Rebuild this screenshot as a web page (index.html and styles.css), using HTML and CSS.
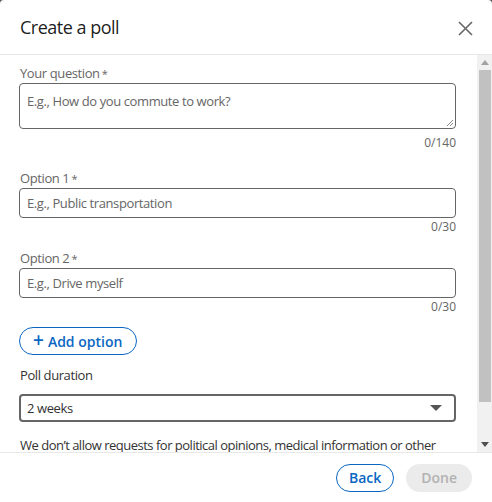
FILE: index.html
```html
<!DOCTYPE html>
<html>
<head>
<meta charset="utf-8">
<link rel="stylesheet" href="styles.css">
</head>
<body>
<div class="modal">
  <header class="modal-header">
    <h2 class="title">Create a poll</h2>
    <button class="close" aria-label="Dismiss">
      <svg width="15" height="15" viewBox="0 0 15 15"><path d="M1 1 L14 14 M14 1 L1 14" stroke="#666" stroke-width="1.6" fill="none"/></svg>
    </button>
  </header>
  <div class="modal-body">
    <div class="content">
      <div class="field field-q">
        <label class="label">Your question<span class="req">*</span></label>
        <div class="textarea">
          <span class="placeholder">E.g., How do you commute to work?</span>
          <svg class="grip" width="8" height="8" viewBox="0 0 8 8"><path d="M7 1 L1 7 M7 4 L4 7" stroke="#888" stroke-width="1" fill="none"/></svg>
        </div>
        <div class="counter">0/140</div>
      </div>
      <div class="field field-o1">
        <label class="label">Option 1<span class="req">*</span></label>
        <div class="input"><span class="placeholder">E.g., Public transportation</span></div>
        <div class="counter">0/30</div>
      </div>
      <div class="field field-o2">
        <label class="label">Option 2<span class="req">*</span></label>
        <div class="input"><span class="placeholder">E.g., Drive myself</span></div>
        <div class="counter">0/30</div>
      </div>
      <button class="add-option"><span class="plus">+</span> Add option</button>
      <div class="duration-label">Poll duration</div>
      <div class="select">
        <span>2 weeks</span>
        <svg width="12" height="7" viewBox="0 0 12 7"><path d="M0 0 H12 L6 6 Z" fill="#555"/></svg>
      </div>
      <p class="notice">We don’t allow requests for political opinions, medical information or other sensitive data.</p>
    </div>
    <div class="scrollbar">
      <div class="sb-arrow"><svg width="8" height="5" viewBox="0 0 8 5"><path d="M0 5 L4 0 L8 5 Z" fill="#a3a3a3"/></svg></div>
      <div class="sb-track"><div class="sb-thumb"></div></div>
      <div class="sb-arrow"><svg width="8" height="5" viewBox="0 0 8 5"><path d="M0 0 L8 0 L4 5 Z" fill="#505050"/></svg></div>
    </div>
  </div>
  <footer class="modal-footer">
    <button class="btn btn-secondary">Back</button>
    <button class="btn btn-disabled">Done</button>
  </footer>
</div>
</body>
</html>
```

FILE: styles.css
```css
* { box-sizing: border-box; }
html, body { margin: 0; padding: 0; }
body {
  background: #5a5a5a;
  font-family: "Segoe UI", "Open Sans", "Noto Sans", sans-serif;
  width: 492px;
  height: 502px;
  overflow: hidden;
}
.modal {
  background: #fff;
  width: 492px;
  height: 502px;
  border-radius: 4px 4px 0 0;
  display: flex;
  flex-direction: column;
}
.modal-header {
  height: 55px;
  flex: none;
  border-bottom: 1px solid #e8e8e8;
  display: flex;
  align-items: center;
  justify-content: space-between;
  padding: 0 19px 0 20px;
}
.title {
  margin: 0;
  font-size: 18px;
  font-weight: 400;
  color: rgba(0,0,0,.9);
  letter-spacing: -0.5px;
}
.close {
  border: 0;
  background: none;
  padding: 0;
  width: 15px;
  height: 15px;
  display: flex;
  margin-top: 2px;
}
.modal-body {
  flex: 1;
  display: flex;
  min-height: 0;
}
.content {
  flex: 1;
  overflow: hidden;
  padding: 10px 21px 0 19px;
  letter-spacing: -0.4px;
}
.field { display: flex; flex-direction: column; }
.label {
  font-size: 13px;
  line-height: 17px;
  color: #666;
  margin-bottom: 1px;
  padding-left: 1px;
}
.req { margin-left: 2px; font-size: 11px; }
.textarea, .input {
  border: 1px solid #666;
  border-radius: 4px;
  position: relative;
  padding: 0 7px;
}
.textarea { height: 46px; padding-top: 5px; }
.input { height: 30px; display: flex; align-items: center; }
.placeholder {
  font-size: 13px;
  color: #666;
  line-height: 18px;
}
.grip { position: absolute; right: 1px; bottom: 1px; }
.counter {
  text-align: right;
  font-size: 12px;
  line-height: 16px;
  color: #666;
  letter-spacing: 0;
}
.field-q .counter { margin-top: 6px; margin-bottom: 19px; }
.field-o1 .counter { margin-top: 1px; margin-bottom: 15px; }
.field-o2 .counter { margin-top: 1px; margin-bottom: 12px; }
.add-option {
  font-family: inherit;
  height: 28px;
  padding: 0 14px 0 13px;
  border: 1px solid #0a66c2;
  border-radius: 14px;
  background: #fff;
  color: #0a66c2;
  font-size: 14px;
  font-weight: 600;
  letter-spacing: 0;
  display: flex;
  align-items: center;
  gap: 4px;
}
.plus { font-size: 19px; font-weight: 600; line-height: 1; margin-top: -2px; }
.duration-label {
  font-size: 13px;
  line-height: 17px;
  color: #333;
  margin-top: 12px;
  margin-bottom: 10px;
  padding-left: 1px;
}
.select {
  height: 28px;
  border: 2px solid #666;
  border-radius: 4px;
  display: flex;
  align-items: center;
  justify-content: space-between;
  padding: 0 12px 0 6px;
  font-size: 13px;
  color: #333;
}
.notice {
  margin: 14px 0 0;
  font-size: 13px;
  line-height: 18px;
  color: #333;
  padding-left: 1px;
  letter-spacing: -0.5px;
}
.scrollbar {
  width: 15px;
  flex: none;
  background: #f1f1f1;
  display: flex;
  flex-direction: column;
}
.sb-arrow {
  height: 15px;
  display: flex;
  align-items: center;
  justify-content: center;
  flex: none;
}
.sb-track { flex: 1; padding: 0 1px 0 2px; }
.sb-thumb { height: 332px; background: #c1c1c1; }
.modal-footer {
  flex: none;
  height: 50px;
  border-top: 1px solid #e8e8e8;
  display: flex;
  justify-content: flex-end;
  align-items: flex-start;
  padding: 11px 20px 0 0;
  gap: 12px;
}
.btn {
  font-family: inherit;
  height: 28px;
  line-height: 26px;
  border-radius: 14px;
  font-size: 14px;
  font-weight: 600;
  padding: 0 12px;
}
.btn-secondary { background: #fff; border: 1px solid #0a66c2; color: #0a66c2; }
.btn-disabled { background: #ebebeb; border: 0; color: #b2b2b2; padding: 0 15px; line-height: 28px; }
```
